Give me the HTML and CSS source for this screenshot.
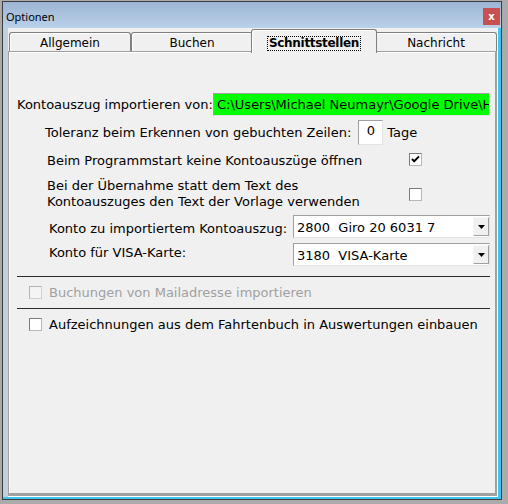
FILE: index.html
```html
<!DOCTYPE html>
<html lang="de">
<head>
<meta charset="utf-8">
<title>Optionen</title>
<link rel="stylesheet" href="styles.css">
</head>
<body>
<div class="screen">
  <div class="window">
    <div class="titlebar">
      <span class="title">Optionen</span>
      <span class="close">x</span>
    </div>
    <div class="frame">
      <div class="client">
        <div class="tabs">
          <div class="tab">Allgemein</div>
          <div class="tab">Buchen</div>
          <div class="tab active"><span class="focus">Schnittstellen</span></div>
          <div class="tab">Nachricht</div>
        </div>
        <div class="panel">
          <div class="row r1">
            <span class="lbl shrink">Kontoauszug importieren von:</span>
            <div class="field green">C:\Users\Michael Neumayr\Google Drive\Haushalt\Kontoauszug.csv</div>
          </div>
          <div class="row r2">
            <span class="lbl">Toleranz beim Erkennen von gebuchten Zeilen:</span>
            <div class="field num">0</div>
            <span class="lbl tage">Tage</span>
          </div>
          <div class="row r3">
            <span class="lbl fixed">Beim Programmstart keine Kontoauszüge öffnen</span>
            <span class="cb up">
              <svg width="11" height="11" viewBox="0 0 11 11"><path d="M2 4.8 L4.2 7.3 L9 2.4" fill="none" stroke="#000" stroke-width="2"/></svg>
            </span>
          </div>
          <div class="row r4">
            <span class="lbl fixed two">Bei der Übernahme statt dem Text des<br>Kontoauszuges den Text der Vorlage verwenden</span>
            <span class="cb"></span>
          </div>
          <div class="row r5">
            <span class="lbl low">Konto zu importiertem Kontoauszug:</span>
            <div class="combo">
              <span class="val">2800  Giro 20 6031 7</span>
              <span class="drop"><svg width="7" height="4" viewBox="0 0 7 4"><polygon points="0,0 7,0 3.5,4" fill="#000"/></svg></span>
            </div>
          </div>
          <div class="row r6">
            <span class="lbl high">Konto für VISA-Karte:</span>
            <div class="combo">
              <span class="val">3180  VISA-Karte</span>
              <span class="drop"><svg width="7" height="4" viewBox="0 0 7 4"><polygon points="0,0 7,0 3.5,4" fill="#000"/></svg></span>
            </div>
          </div>
          <div class="sep s1"></div>
          <div class="row r8">
            <span class="cb disabled"></span>
            <span class="lbl opt dim">Buchungen von Mailadresse importieren</span>
          </div>
          <div class="sep s2"></div>
          <div class="row r9">
            <span class="cb"></span>
            <span class="lbl opt">Aufzeichnungen aus dem Fahrtenbuch in Auswertungen einbauen</span>
          </div>
        </div>
      </div>
    </div>
  </div>
</div>
</body>
</html>
```

FILE: styles.css
```css
html, body {
  margin: 0;
  padding: 0;
}
body {
  width: 508px;
  height: 504px;
  background: #ababab;
  font-family: "DejaVu Sans", sans-serif;
  color: #000;
  overflow: hidden;
}
.screen {
  padding: 1px 0 0 2px;
}
.window {
  width: 500px;
  height: 499px;
  box-sizing: border-box;
  border: 1px solid #3c3c3c;
  display: flex;
  flex-direction: column;
  background: #c1d0df;
}
.titlebar {
  height: 26px;
  flex: none;
  display: flex;
  justify-content: space-between;
  align-items: flex-start;
  padding-left: 3px;
  background: linear-gradient(to bottom, #9cb5d3, #bad1ea);
}
.title {
  font-family: "Noto Sans", sans-serif;
  font-size: 11px;
  line-height: 15px;
  margin-top: 7px;
}
.close {
  width: 17px;
  height: 17px;
  margin-top: 6px;
  margin-right: 1px;
  background: #c75050;
  color: #fff;
  font-size: 10px;
  font-weight: bold;
  line-height: 14px;
  display: flex;
  justify-content: center;
  align-items: center;
}
.frame {
  flex: 1;
  display: flex;
  padding-left: 5px;
  border-right: 3px solid #40c4ee;
  border-bottom: 2px solid #40c4ee;
}
.client {
  width: 489px;
  height: 468px;
  border-right: 1px solid #fff;
  border-bottom: 1px solid #fff;
  background: #f0f0f0;
  display: flex;
  flex-direction: column;
}
.tabs {
  height: 23px;
  flex: none;
  display: flex;
  align-items: flex-end;
  padding-left: 1px;
}
.tab {
  width: 122px;
  height: 19px;
  flex: none;
  box-sizing: border-box;
  border: 1px solid #7f7f7f;
  border-bottom: none;
  border-radius: 3px 3px 0 0;
  box-shadow: inset 1px 1px 0 #fff;
  background: #f0f0f0;
  text-align: center;
  font-size: 12px;
  padding-top: 3px;
}
.tab.active {
  width: 126px;
  height: 24px;
  margin: 0 -2px -2px;
  position: relative;
  z-index: 1;
  padding-top: 6px;
  font-weight: bold;
  letter-spacing: -0.3px;
}
.focus {
  display: inline-block;
  border: 1px dotted #000;
  padding: 0 1px;
  line-height: 13px;
}
.panel {
  height: 445px;
  flex: none;
  box-sizing: border-box;
  border-left: 1px solid #a0a0a0;
  border-top: 1px solid #a0a0a0;
  border-right: 2px solid #a0a0a0;
  border-bottom: 3px solid #a0a0a0;
  box-shadow: inset 1px 1px 0 #fff;
  padding-right: 5px;
  font-size: 13px;
  display: flex;
  flex-direction: column;
}
.row {
  display: flex;
  align-items: center;
  flex: none;
}
.lbl {
  white-space: nowrap;
  line-height: 15px;
  flex: none;
}
.lbl.shrink {
  flex: 0 1 auto;
  min-width: 0;
}
.lbl.fixed {
  width: 362px;
}
.lbl.two {
  line-height: 16px;
}
.lbl.low {
  padding-top: 4px;
}
.lbl.high {
  padding-bottom: 4px;
}
.lbl.opt {
  margin-left: 7px;
}
.lbl.dim {
  color: #a0a0a0;
}
.lbl.tage {
  margin-left: 4px;
}
.field {
  box-sizing: border-box;
  border: 1px solid;
  border-color: #a0a0a0 #e3e3e3 #e3e3e3 #a0a0a0;
  white-space: nowrap;
  overflow: hidden;
}
.green {
  margin-left: auto;
  flex: 0 0 277px;
  height: 23px;
  background: #00ff00;
  padding-left: 3px;
  line-height: 21px;
}
.num {
  width: 25px;
  height: 25px;
  margin-left: 7px;
  background: #fff;
  text-align: center;
  line-height: 20px;
  flex: none;
}
.r1 { margin-top: 41px; height: 23px; padding-left: 8px; }
.r2 { margin-top: 4px; height: 25px; padding-left: 36px; }
.r3 { margin-top: 5px; height: 21px; padding-left: 38px; }
.r4 { margin-top: 7px; height: 32px; padding-left: 38px; }
.r5 { margin-top: 5px; height: 23px; padding-left: 40px; }
.r6 { margin-top: 5px; height: 23px; padding-left: 40px; }
.r8 { margin-top: 8px; height: 15px; padding-left: 20px; }
.r9 { margin-top: 8px; height: 15px; padding-left: 20px; }
.cb {
  width: 13px;
  height: 13px;
  flex: none;
  box-sizing: border-box;
  border: 1px solid;
  border-color: #7c7c7c #b8b8b8 #b8b8b8 #7c7c7c;
  background: #fff;
  display: flex;
  align-items: center;
  justify-content: center;
}
.cb.up {
  margin-bottom: 2px;
}
.cb.disabled {
  border-color: #b4b4b4 #d0d0d0 #d0d0d0 #b4b4b4;
  background: #f4f4f4;
}
.combo {
  margin-left: auto;
  width: 197px;
  height: 23px;
  flex: none;
  box-sizing: border-box;
  border: 1px solid;
  border-color: #a0a0a0 #e3e3e3 #e3e3e3 #a0a0a0;
  background: #fff;
  display: flex;
  align-items: flex-start;
}
.val {
  flex: 1;
  white-space: pre;
  padding-left: 3px;
  padding-top: 4px;
  line-height: 15px;
}
.drop {
  width: 16px;
  height: 19px;
  margin-top: 1px;
  box-sizing: border-box;
  border: 1px solid;
  border-color: #f8f8f8 #a0a0a0 #a0a0a0 #f8f8f8;
  background: #f0f0f0;
  display: flex;
  align-items: center;
  justify-content: center;
}
.sep {
  height: 1px;
  flex: none;
  margin-left: 8px;
  background: #2a2a2a;
}
.s1 { margin-top: 10px; }
.s2 { margin-top: 8px; }
```
